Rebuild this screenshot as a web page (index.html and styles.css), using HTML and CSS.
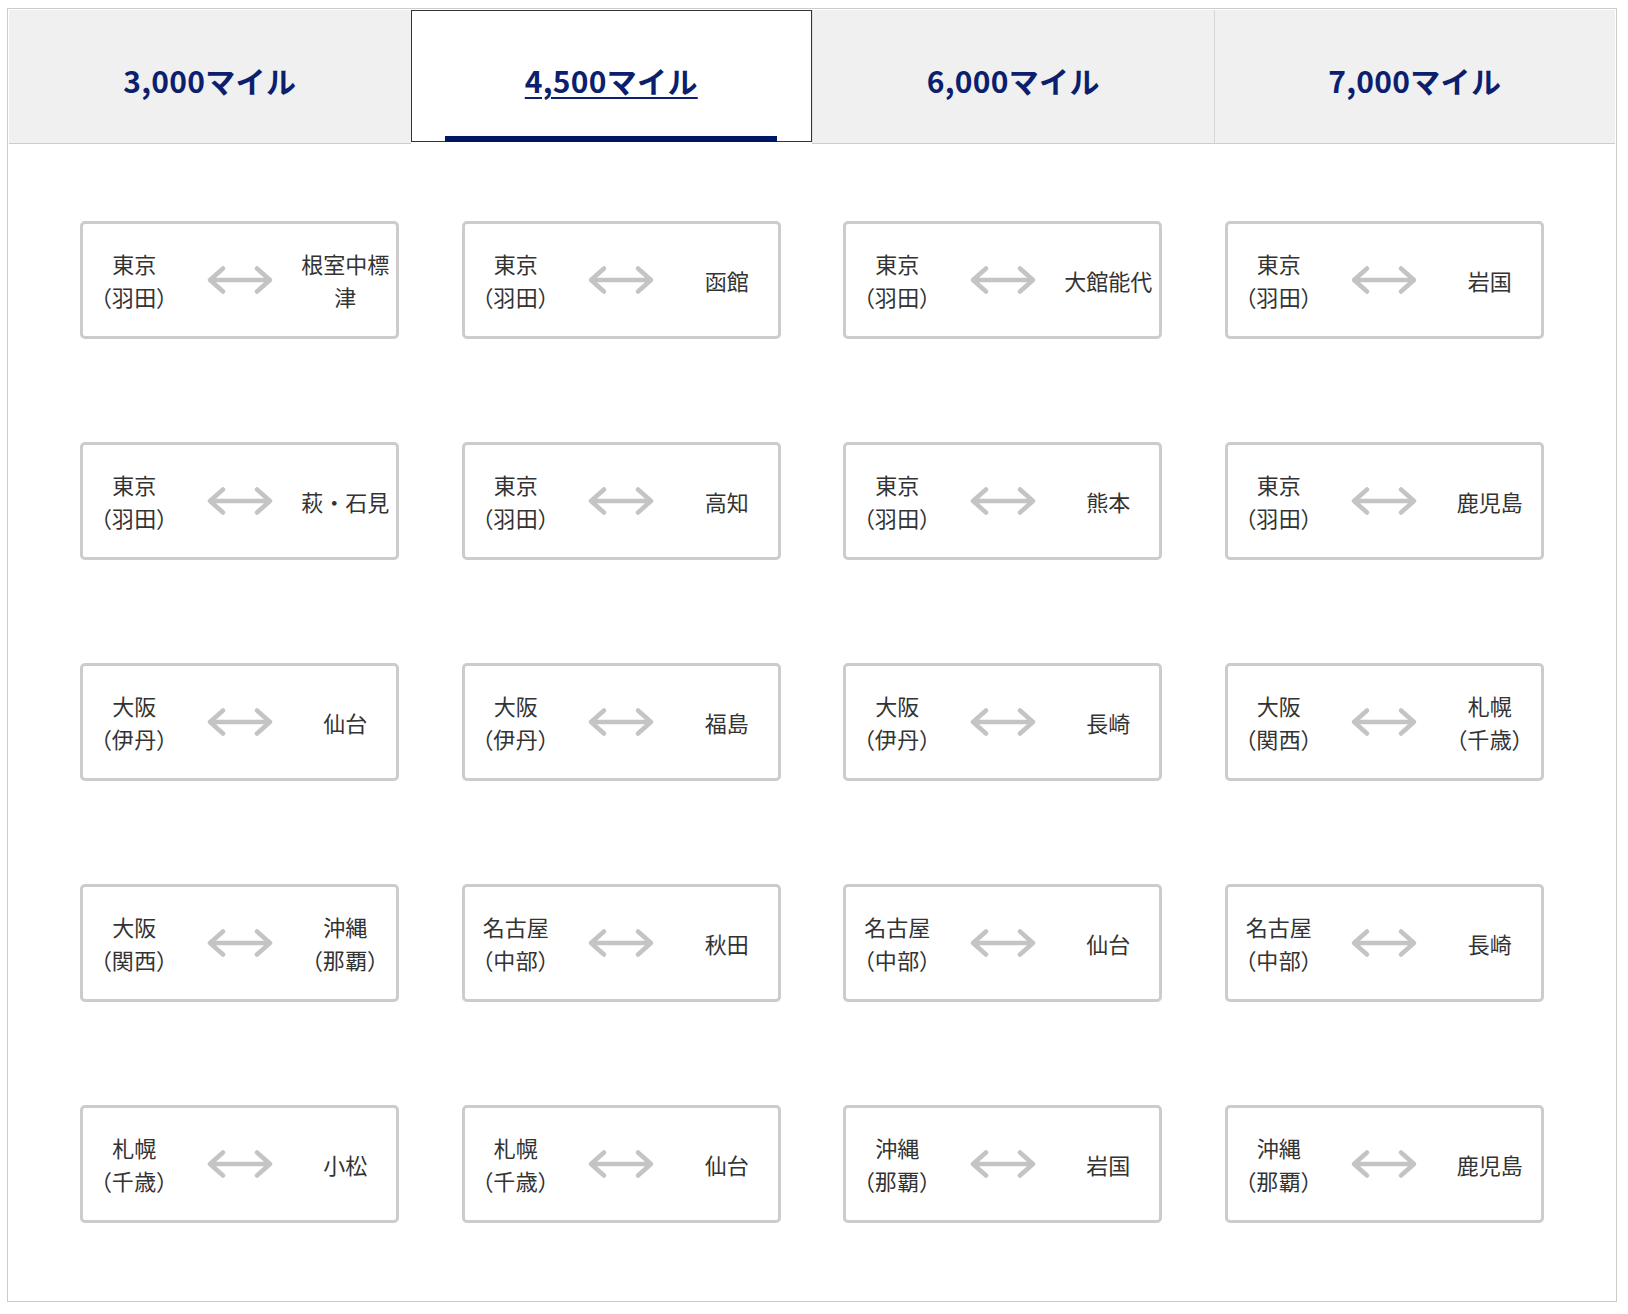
FILE: index.html
```html
<!DOCTYPE html>
<html lang="ja">
<head>
  <meta charset="UTF-8">
  <meta name="viewport" content="width=device-width, initial-scale=1.0">
  <title>特典航空券 必要マイル</title>
  <link rel="stylesheet" href="styles.css">
</head>
<body>
  <svg width="0" height="0" class="defs">
    <symbol id="arrow" viewBox="0 0 68 30">
      <path d="M4 15 H64 M17 3.5 L4 15 L17 26.5 M51 3.5 L64 15 L51 26.5" fill="none" stroke="#c4c4c4" stroke-width="4.5" stroke-linecap="round" stroke-linejoin="round"/>
    </symbol>
  </svg>

  <div class="mile-box">
    <!-- タブ -->
    <ul class="tabs">
      <li class="tab"><a href="#">3,000マイル</a></li>
      <li class="tab active"><a href="#">4,500マイル</a></li>
      <li class="tab"><a href="#">6,000マイル</a></li>
      <li class="tab"><a href="#">7,000マイル</a></li>
    </ul>

    <!-- 路線一覧 -->
    <div class="routes">
      <div class="route"><p class="city">東京<br><span class="sub">（羽田）</span></p><svg class="arrow"><use href="#arrow"/></svg><p class="city">根室中標津</p></div>
      <div class="route"><p class="city">東京<br><span class="sub">（羽田）</span></p><svg class="arrow"><use href="#arrow"/></svg><p class="city">函館</p></div>
      <div class="route"><p class="city">東京<br><span class="sub">（羽田）</span></p><svg class="arrow"><use href="#arrow"/></svg><p class="city">大館能代</p></div>
      <div class="route"><p class="city">東京<br><span class="sub">（羽田）</span></p><svg class="arrow"><use href="#arrow"/></svg><p class="city">岩国</p></div>

      <div class="route"><p class="city">東京<br><span class="sub">（羽田）</span></p><svg class="arrow"><use href="#arrow"/></svg><p class="city">萩・石見</p></div>
      <div class="route"><p class="city">東京<br><span class="sub">（羽田）</span></p><svg class="arrow"><use href="#arrow"/></svg><p class="city">高知</p></div>
      <div class="route"><p class="city">東京<br><span class="sub">（羽田）</span></p><svg class="arrow"><use href="#arrow"/></svg><p class="city">熊本</p></div>
      <div class="route"><p class="city">東京<br><span class="sub">（羽田）</span></p><svg class="arrow"><use href="#arrow"/></svg><p class="city">鹿児島</p></div>

      <div class="route"><p class="city">大阪<br><span class="sub">（伊丹）</span></p><svg class="arrow"><use href="#arrow"/></svg><p class="city">仙台</p></div>
      <div class="route"><p class="city">大阪<br><span class="sub">（伊丹）</span></p><svg class="arrow"><use href="#arrow"/></svg><p class="city">福島</p></div>
      <div class="route"><p class="city">大阪<br><span class="sub">（伊丹）</span></p><svg class="arrow"><use href="#arrow"/></svg><p class="city">長崎</p></div>
      <div class="route"><p class="city">大阪<br><span class="sub">（関西）</span></p><svg class="arrow"><use href="#arrow"/></svg><p class="city">札幌<br><span class="sub">（千歳）</span></p></div>

      <div class="route"><p class="city">大阪<br><span class="sub">（関西）</span></p><svg class="arrow"><use href="#arrow"/></svg><p class="city">沖縄<br><span class="sub">（那覇）</span></p></div>
      <div class="route"><p class="city">名古屋<br><span class="sub">（中部）</span></p><svg class="arrow"><use href="#arrow"/></svg><p class="city">秋田</p></div>
      <div class="route"><p class="city">名古屋<br><span class="sub">（中部）</span></p><svg class="arrow"><use href="#arrow"/></svg><p class="city">仙台</p></div>
      <div class="route"><p class="city">名古屋<br><span class="sub">（中部）</span></p><svg class="arrow"><use href="#arrow"/></svg><p class="city">長崎</p></div>

      <div class="route"><p class="city">札幌<br><span class="sub">（千歳）</span></p><svg class="arrow"><use href="#arrow"/></svg><p class="city">小松</p></div>
      <div class="route"><p class="city">札幌<br><span class="sub">（千歳）</span></p><svg class="arrow"><use href="#arrow"/></svg><p class="city">仙台</p></div>
      <div class="route"><p class="city">沖縄<br><span class="sub">（那覇）</span></p><svg class="arrow"><use href="#arrow"/></svg><p class="city">岩国</p></div>
      <div class="route"><p class="city">沖縄<br><span class="sub">（那覇）</span></p><svg class="arrow"><use href="#arrow"/></svg><p class="city">鹿児島</p></div>
    </div>
  </div>
</body>
</html>
```

FILE: styles.css
```css
/* リセット */
* {
  box-sizing: border-box;
  margin: 0;
  padding: 0;
}

body {
  font-family: "Noto Sans CJK JP", "Noto Sans", sans-serif;
  background-color: #fff;
  color: #333;
}

.defs {
  position: absolute;
}

/* 外枠 */
.mile-box {
  width: 1610px;
  margin: 8px 0 0 7px;
  border: 1px solid #ccc;
}

/* タブ */
.tabs {
  list-style: none;
  display: grid;
  grid-template-columns: repeat(4, 1fr);
  margin: 1px 1px 0;
  height: 134px;
}

.tab {
  position: relative;
  display: flex;
  align-items: center;
  justify-content: center;
  padding-top: 7px;
  background-color: #f0f0f0;
  border-bottom: 1px solid #ccc;
}

.tab + .tab {
  border-left: 1px solid #d6d6d6;
}

.tab a {
  color: #0b1f6e;
  font-size: 30px;
  font-weight: 700;
  text-decoration: none;
  letter-spacing: 0.3px;
}

.tab.active {
  height: 132px;
  background-color: #fff;
  border: 1px solid #333;
}

.tab.active + .tab {
  border-left: 1px solid #e0e0e0;
}

.tab.active a {
  text-decoration: underline;
  text-decoration-thickness: 2px;
  text-underline-offset: 4px;
}

.tab.active::after {
  content: "";
  position: absolute;
  left: 50%;
  bottom: -1px;
  width: 332px;
  height: 6px;
  transform: translateX(-50%);
  background-color: #001764;
}

/* 路線一覧 */
.routes {
  display: grid;
  grid-template-columns: repeat(4, 319px);
  grid-auto-rows: 118px;
  column-gap: 62.5px;
  row-gap: 103px;
  justify-content: center;
  padding: 77px 0 78px;
}

.route {
  display: flex;
  align-items: center;
  justify-content: space-between;
  padding: 0 3px;
  border: 3px solid #ccc;
  border-radius: 5px;
}

.city {
  width: 96px;
  font-size: 22px;
  line-height: 33px;
  text-align: center;
}

.city .sub {
  font-feature-settings: "palt";
  letter-spacing: 0.5px;
}

.arrow {
  width: 68px;
  height: 30px;
}
```
